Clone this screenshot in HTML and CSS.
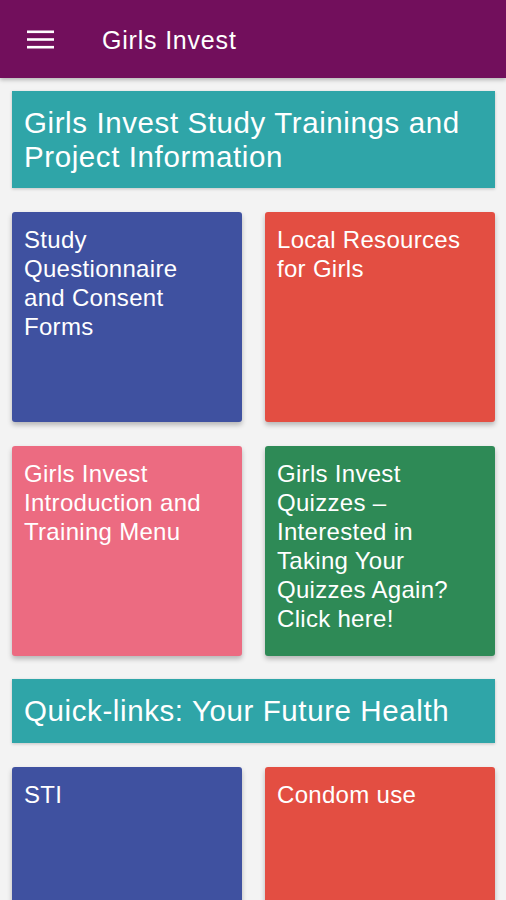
FILE: index.html
```html
<!DOCTYPE html>
<html>
<head>
<meta charset="utf-8">
<link rel="stylesheet" href="styles.css">
</head>
<body>
<header class="appbar">
  <svg class="menu" width="27" height="19" viewBox="0 0 27 19"><rect x="0" y="0.5" width="27" height="2.6" fill="#fff"/><rect x="0" y="8.2" width="27" height="2.6" fill="#fff"/><rect x="0" y="15.9" width="27" height="2.6" fill="#fff"/></svg>
  <span class="title">Girls Invest</span>
</header>
<main class="content">
  <div class="banner banner-tall">Girls Invest Study Trainings and Project Information</div>
  <div class="grid">
    <div class="card blue">Study Questionnaire and Consent Forms</div>
    <div class="card red">Local Resources for Girls</div>
    <div class="card pink">Girls Invest Introduction and Training Menu</div>
    <div class="card green">Girls Invest Quizzes – Interested in Taking Your Quizzes Again? Click here!</div>
  </div>
  <div class="banner banner-quick">Quick-links: Your Future Health</div>
  <div class="grid">
    <div class="card blue">STI</div>
    <div class="card red">Condom use</div>
  </div>
</main>
</body>
</html>
```
FILE: styles.css
```css
html, body { margin: 0; padding: 0; }
body {
  width: 506px;
  height: 900px;
  overflow: hidden;
  background: #f3f3f3;
  font-family: "Liberation Sans", Arial, sans-serif;
  color: #fff;
}
.appbar {
  height: 78px;
  background: #720f5c;
  display: flex;
  align-items: center;
  padding-left: 27px;
  box-shadow: 0 2px 4px rgba(0,0,0,0.25);
  position: relative;
  z-index: 1;
}
.menu { display: block; margin-top: 1px; }
.title {
  margin-left: 48px;
  font-size: 25px;
  letter-spacing: 0.8px;
  margin-top: 2px;
}
.content {
  padding: 13px 11px 0 12px;
  display: flex;
  flex-direction: column;
  gap: 24px;
}
.banner {
  background: #2fa5a8;
  font-size: 29.5px;
  letter-spacing: 0.6px;
  line-height: 34px;
  padding: 15px 12px;
  box-shadow: 0 1px 3px rgba(0,0,0,0.2);
}
.banner-tall { padding: 15px 12px 14px; }
.banner-quick { margin-top: -1px; }
.grid {
  display: grid;
  grid-template-columns: 230px 230px;
  column-gap: 23px;
  row-gap: 24px;
}
.card {
  height: 210px;
  box-sizing: border-box;
  padding: 13px 30px 13px 12px;
  font-size: 24px;
  letter-spacing: 0.3px;
  line-height: 29px;
  border-radius: 3px;
  box-shadow: 0 3px 5px rgba(0,0,0,0.25);
}
.blue { background: #3f51a0; }
.red { background: #e34e42; }
.pink { background: #ec6b81; }
.green { background: #2e8a56; }
```
